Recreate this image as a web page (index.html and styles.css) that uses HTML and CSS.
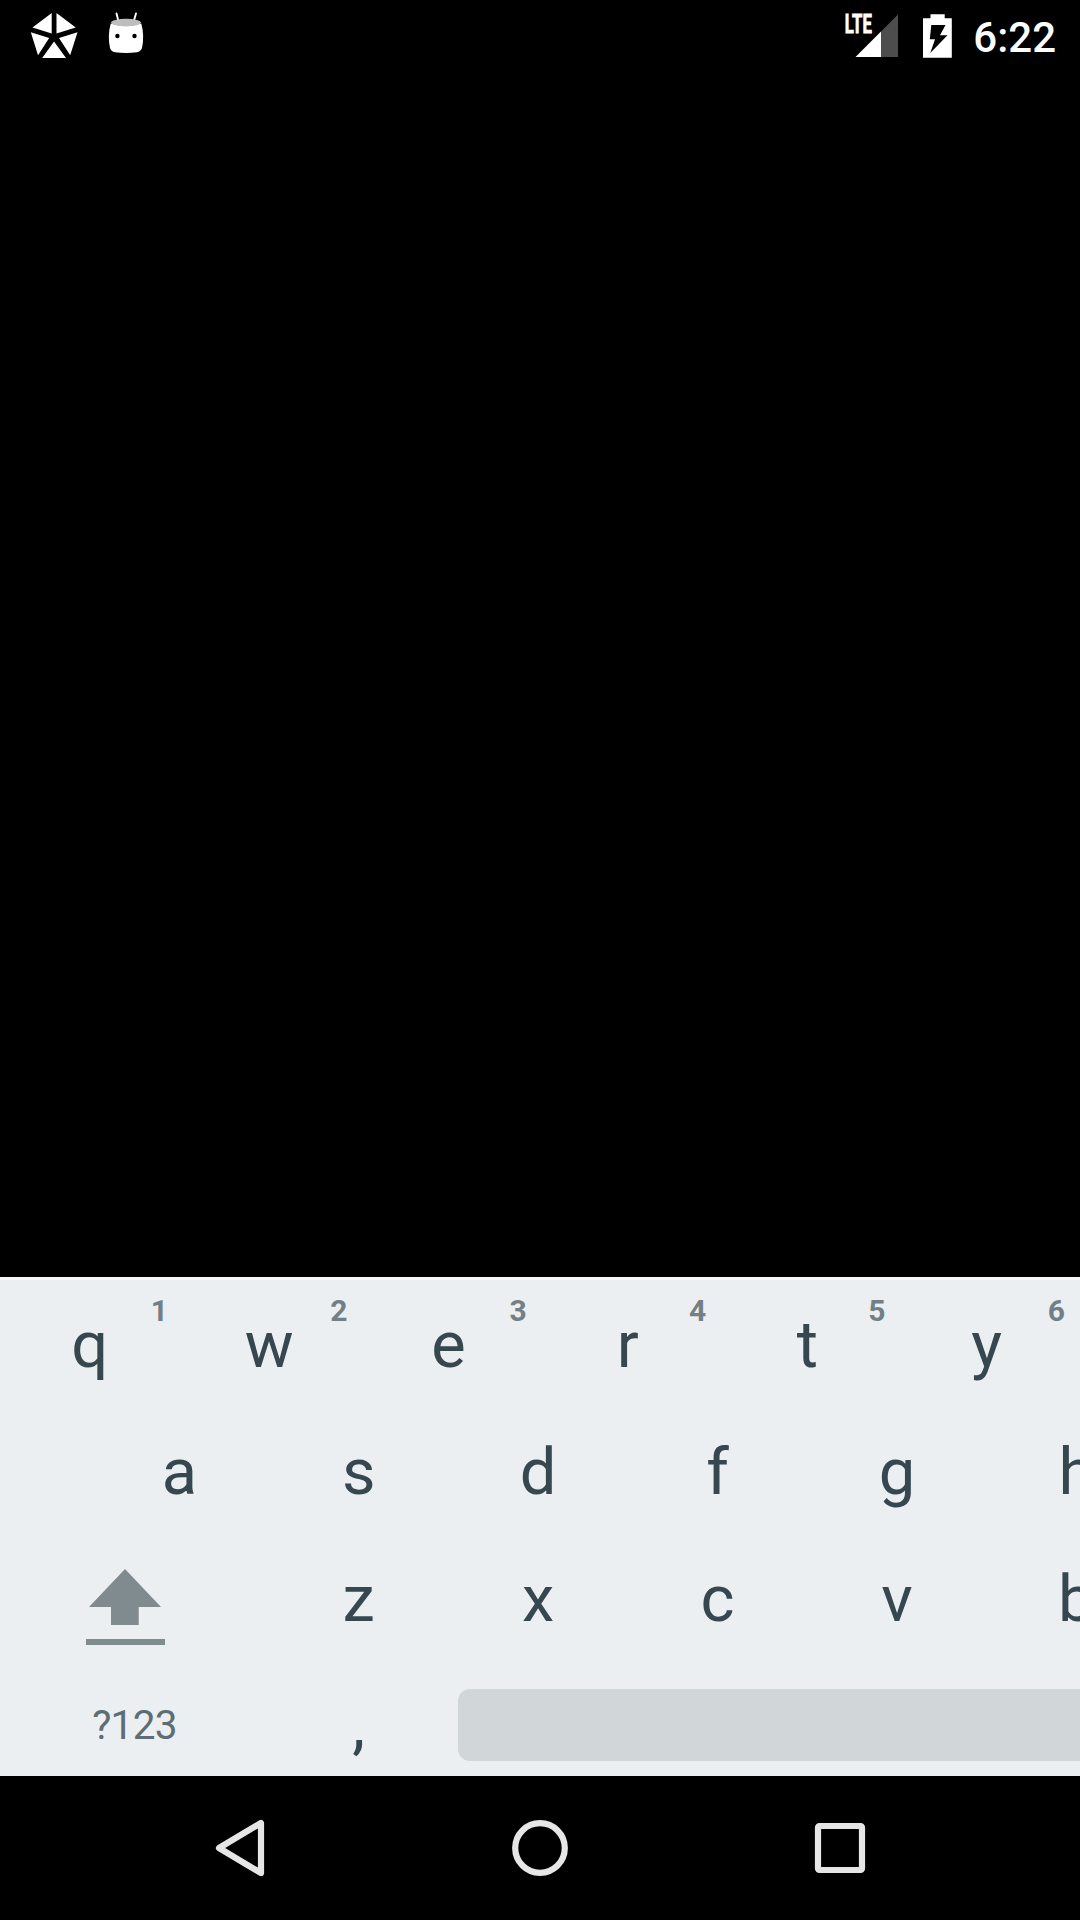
FILE: index.html
```html
<!DOCTYPE html>
<html lang="en">
<head>
<meta charset="utf-8">
<title>Keyboard</title>
<link rel="stylesheet" href="styles.css">
</head>
<body>
<div class="screen">
  <header class="status">
    <svg class="notifications" width="180" height="72" viewBox="0 0 180 72">
      <path fill="#fff" d="M51.7 13V33.6L32.5 27.5ZM56.5 13V33.6L75.7 27.5ZM30.8 32.3L49.2 38L38 55.2ZM77.5 32.3L59 38L70.2 55.2ZM54 41.5L66 58H42.2Z"/>
      <path stroke="#fff" stroke-width="1.9" stroke-linecap="round" d="M116.5 13.5L118.5 21.5M136 13.5L133.7 21.5"/>
      <path fill="#fff" d="M110.7 23.5Q126 28 141.3 23.5Q144.6 36 142 48Q141 51.6 137 52.2Q126 53.6 115 52.2Q111 51.6 110 48Q107.400 36 110.700 23.500Z"/>
      <ellipse cx="126" cy="22.600" rx="15" ry="3.800" fill="#bdbdbd"/>
      <circle cx="117.400" cy="36" r="2.200"/><circle cx="134.500" cy="36" r="2.200"/>
    </svg>
    <div class="system">
      <svg width="115" height="72" viewBox="840 0 115 72">
        <text class="network" x="844.800" y="33.300" textLength="27" lengthAdjust="spacingAndGlyphs">LTE</text>
        <path fill="#4d4d4d" d="M881 31.500L898 14.500V57H881Z"/>
        <path fill="#fff" d="M855.500 57L881 31.500V57Z"/>
        <path fill="#fff" fill-rule="evenodd" d="M930.500 14.200H944.700V18.200H951.800V57.700H923V18.200H930.500ZM931.300 25L929.800 39.300H935L930.300 53L947.500 35.300H940L945.500 25Z"/>
      </svg>
      <span class="clock">6:22</span>
    </div>
  </header>
  <main class="content"></main>
  <section class="keyboard">
    <div class="row">
      <span class="key">q<span class="hint">1</span></span>
      <span class="key">w<span class="hint">2</span></span>
      <span class="key">e<span class="hint">3</span></span>
      <span class="key">r<span class="hint">4</span></span>
      <span class="key">t<span class="hint">5</span></span>
      <span class="key">y<span class="hint">6</span></span>
    </div>
    <div class="row offset">
      <span class="key">a</span><span class="key">s</span><span class="key">d</span><span class="key">f</span><span class="key">g</span><span class="key">h</span>
    </div>
    <div class="row">
      <span class="key wide">
        <svg width="269" height="127" viewBox="0 0 269 127" fill="#808b8f"><path d="M125 34L161 72H138.700V90H111V72H89ZM86 104H165V110H86Z"/></svg>
      </span>
      <span class="key">z</span><span class="key">x</span><span class="key">c</span><span class="key">v</span><span class="key">b</span>
    </div>
    <div class="row bottom">
      <span class="key wide symbols">?123</span>
      <span class="key">,</span>
      <span class="space"></span>
    </div>
  </section>
  <nav class="nav">
    <svg width="64" height="64" viewBox="0 0 64 64"><path d="M53 7V57L11 32Z"/></svg>
    <svg width="64" height="64" viewBox="0 0 64 64"><circle cx="32" cy="32" r="24.800"/></svg>
    <svg width="64" height="64" viewBox="0 0 64 64"><rect x="10" y="10" width="44" height="44" rx="1.500"/></svg>
  </nav>
</div>
</body>
</html>
```
FILE: styles.css
```css
body {
  margin: 0;
  background: #000;
  font-family: Roboto, sans-serif;
}

.screen {
  display: flex;
  flex-direction: column;
  width: 1080px;
  height: 1920px;
  overflow: hidden;
  background: #000;
}

.status {
  display: flex;
  justify-content: space-between;
  height: 72px;
}

.system {
  display: flex;
  gap: 18px;
  padding-right: 24px;
}

.network {
  fill: #fff;
  stroke: #fff;
  stroke-width: 0.8px;
  font-size: 25.5px;
  font-weight: 700;
}

.clock {
  color: #fff;
  font-size: 42px;
  font-weight: 500;
  line-height: 75px;
}

.content {
  flex: 1;
}

.keyboard {
  box-sizing: border-box;
  height: 499px;
  padding-top: 1px;
  overflow: hidden;
  border-top: 3px solid #f6f8f9;
  background: #ebeff2;
  color: #37474f;
}

.row {
  display: flex;
  width: 1300px;
  height: 127px;
}

.offset {
  padding-left: 89.7px;
}

.key {
  position: relative;
  flex: none;
  width: 179.4px;
  font-size: 65px;
  line-height: 129px;
  text-align: center;
}

.bottom .key {
  line-height: 127px;
}

.wide {
  width: 269px;
}

.wide svg {
  display: block;
}

.bottom .symbols {
  color: #5f6c72;
  font-size: 40.5px;
  letter-spacing: -0.7px;
}

.hint {
  position: absolute;
  top: 12px;
  right: 11.4px;
  color: #737f84;
  font-size: 30px;
  font-weight: 700;
  line-height: 36px;
}

.space {
  flex: 1;
  height: 72px;
  margin: 27px 0 0 10px;
  border-radius: 12px;
  background: #d1d6d9;
}

.nav {
  display: flex;
  justify-content: center;
  align-items: center;
  gap: 236px;
  height: 144px;
}

.nav svg {
  fill: none;
  stroke: #e6e6e6;
  stroke-width: 6.200;
  stroke-linejoin: round;
}
```
